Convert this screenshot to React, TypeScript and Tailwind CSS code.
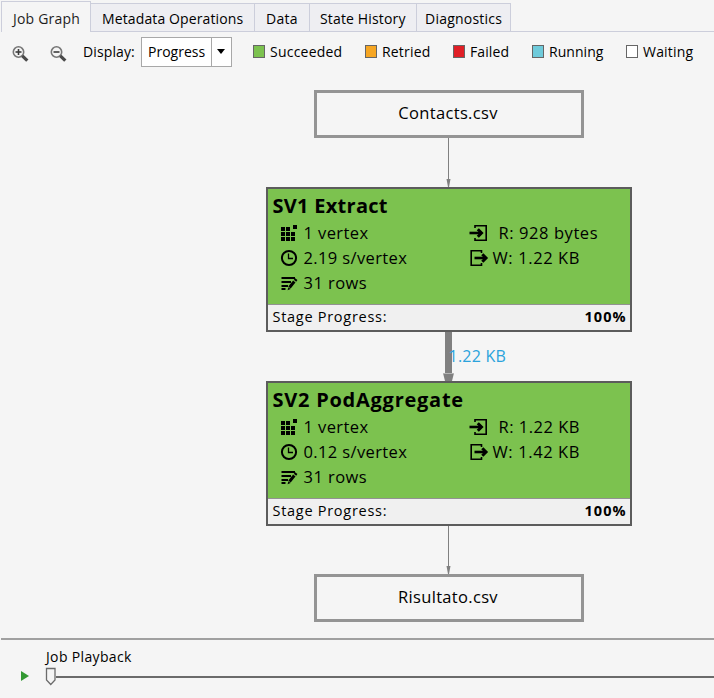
import React from "react";

const legend = [
  { name: "Succeeded", color: "bg-[#7cc24f]", place: "ml-[21px] w-[112px]", track: "tracking-[0.22px]" },
  { name: "Retried", color: "bg-[#f6a623]", place: "w-[88px]", track: "tracking-[0.18px]" },
  { name: "Failed", color: "bg-[#e01f26]", place: "w-[79px]", track: "tracking-[0.1px]" },
  { name: "Running", color: "bg-[#6fcbdb]", place: "w-[94px]", track: "tracking-[0.05px]" },
  { name: "Waiting", color: "bg-white", place: "w-[80px]", track: "tracking-[0.2px]" },
];

const tabs = [
  { name: "Metadata Operations", width: "w-[164px]", pad: "pl-[11px]", track: "tracking-[0.12px]" },
  { name: "Data", width: "w-[55px]", pad: "pl-[11px]", track: "tracking-[0.25px]" },
  { name: "State History", width: "w-[107px]", pad: "pl-[10px]", track: "tracking-[0.15px]" },
  { name: "Diagnostics", width: "w-[94px]", pad: "pl-[8px]", track: "tracking-[0.22px]" },
];

function Magnifier({ plus }: { plus?: boolean }) {
  return (
    <svg width="18" height="18" viewBox="0 0 18 18" fill="none" className="mt-[5px] shrink-0">
      <circle cx="7.5" cy="7" r="5.2" stroke="#777777" strokeWidth="1.6" />
      <path d="M4.5 7h6" stroke="#3c3c3c" strokeWidth="1.6" />
      {plus && <path d="M7.5 4v6" stroke="#3c3c3c" strokeWidth="1.6" />}
      <path d="M11.3 10.8l5 4.9" stroke="#4a4a4a" strokeWidth="3.2" />
    </svg>
  );
}

function VertexIcon() {
  return (
    <svg width="18" height="18" viewBox="0 0 18 18">
      <path d="M1 3h4v4H1zM6 3h4v4H6zM1 8h4v4H1zM6 8h4v4H6zM11 8h4v4h-4zM1 13h4v4H1zM6 13h4v4H6zM11 13h4v4h-4zM13 1h4v4h-4z" />
    </svg>
  );
}

function ClockIcon() {
  return (
    <svg width="18" height="18" viewBox="0 0 18 18" fill="none" stroke="black">
      <circle cx="9" cy="9" r="7.1" strokeWidth="2" />
      <path d="M8.5 4.5V9.5H13" strokeWidth="1.3" />
    </svg>
  );
}

function RowsIcon() {
  return (
    <svg width="18" height="18" viewBox="0 0 18 18" fill="none" stroke="black">
      <path d="M1.5 4H15M1.5 8H11M1.5 12H8M1.5 15H5.5" strokeWidth="1.9" />
      <path d="M9.5 13.5L14.3 7.5" strokeWidth="3" />
      <path d="M15 6.7L16.3 5.1" strokeWidth="3" />
      <path d="M7.6 16.2l.8-3 2.2 1.8z" fill="black" stroke="none" />
    </svg>
  );
}

function ReadIcon() {
  return (
    <svg width="20" height="18" viewBox="0 0 20 18" fill="none" stroke="black">
      <path d="M6 4V1.8H17.2V16.2H6V14" strokeWidth="1.6" />
      <path d="M0.5 9H12" strokeWidth="2.6" />
      <path d="M8.8 5.3l3.7 3.7-3.7 3.7" strokeWidth="3" />
    </svg>
  );
}

function WriteIcon() {
  return (
    <svg width="20" height="18" viewBox="0 0 20 18" fill="none" stroke="black">
      <path d="M12.5 4V1.8H2.2V16.2H12.5V14" strokeWidth="1.6" />
      <path d="M5.5 9H17" strokeWidth="2.6" />
      <path d="M13.3 5.3l3.7 3.7-3.7 3.7" strokeWidth="3" />
    </svg>
  );
}

function FileNode({ name, track }: { name: string; track: string }) {
  return (
    <div className="flex h-[48px] w-[270px] items-center justify-center border-[3px] border-[#949494] pb-[1px]">
      <span className={"mr-[1px] text-[16.5px] " + track}>{name}</span>
    </div>
  );
}

function ThinArrow({ height }: { height: string }) {
  return (
    <svg width="12" viewBox="0 0 12 49" preserveAspectRatio="xMidYMax slice" className={"shrink-0 " + height}>
      <path d="M5.5 0V43" stroke="#808080" strokeWidth="1" />
      <path d="M3.5 41h4L6 49H5z" fill="#808080" />
    </svg>
  );
}

interface StageProps {
  title: string;
  titleTrack: string;
  time: string;
  read: string;
  readTrack: string;
  write: string;
}

function Stage({ title, titleTrack, time, read, readTrack, write }: StageProps) {
  return (
    <div className="h-[145px] w-[366px] border-2 border-[#5c5c5c] bg-[#7cc24f]">
      <div className={"h-[31px] pl-[5px] text-[20px] leading-[34px] font-bold " + titleTrack}>{title}</div>
      <div className="grid h-[84px] grid-cols-[189px_1fr] pl-[12px] text-[16.5px] leading-[25px]">
        <div>
          <div className="flex h-[25px] items-center gap-[6px]">
            <VertexIcon />
            <span className="tracking-[0.4px]">1 vertex</span>
          </div>
          <div className="flex h-[25px] items-center gap-[6px]">
            <ClockIcon />
            <span className="tracking-[0.37px]">{time}</span>
          </div>
          <div className="flex h-[25px] items-center gap-[6px]">
            <RowsIcon />
            <span className="tracking-[0.45px]">31 rows</span>
          </div>
        </div>
        <div>
          <div className="flex h-[25px] items-center gap-[10px]">
            <ReadIcon />
            <span className={readTrack}>R: {read}</span>
          </div>
          <div className="flex h-[25px] items-center gap-[4px]">
            <WriteIcon />
            <span className="tracking-[0.6px]">W: {write}</span>
          </div>
        </div>
      </div>
      <div className="flex h-[26px] justify-between border-t border-[#929292] bg-[#f0f0f0] pr-[3px] pl-[5px] text-[14.5px] leading-[24px]">
        <span className="tracking-[0.72px]">Stage Progress:</span>
        <span className="font-bold tracking-[1px]">100%</span>
      </div>
    </div>
  );
}

export default function App() {
  return (
    <div className="flex h-[698px] w-[714px] flex-col overflow-hidden bg-[#f5f5f5] font-['Open_Sans','Noto_Sans',sans-serif] text-[14px] whitespace-nowrap text-black">
      <div className="flex h-[32px] items-end">
        <div className="ml-px h-[31px] w-[90px] border-t border-r border-l border-[#cccedb] pl-[11px] leading-[34px] tracking-[0.2px] text-[#1e1e1e]">
          Job Graph
        </div>
        {tabs.map((t) => (
          <div
            key={t.name}
            className={"h-[29px] border-t border-r border-b border-[#cccedb] bg-[#eeeef2] leading-[30px] " + t.width + " " + t.pad + " " + t.track}
          >
            {t.name}
          </div>
        ))}
        <div className="h-[29px] flex-1 border-b border-[#cccedb]" />
      </div>

      <div className="flex h-[39px] items-center pl-[11px]">
        <Magnifier plus />
        <div className="w-[20px]" />
        <Magnifier />
        <span className="ml-[16px] w-[58px] tracking-[0.12px]">Display:</span>
        <div className="flex h-[30px] w-[91px] border border-[#a8a8a8] bg-white">
          <span className="w-[70px] border-r border-[#a8a8a8] pl-[6px] leading-[27px]">Progress</span>
          <span className="flex flex-1 items-center justify-center pr-px">
            <svg width="8" height="5" viewBox="0 0 8 5">
              <path d="M0 0h8L4 5z" />
            </svg>
          </span>
        </div>
        {legend.map((l) => (
          <div key={l.name} className={"flex shrink-0 items-center gap-[5px] " + l.place}>
            <span className={"h-[13px] w-[12px] border border-[#666666] " + l.color} />
            <span className={l.track}>{l.name}</span>
          </div>
        ))}
      </div>

      <div className="ml-[265px] flex h-[567px] w-[367px] flex-col items-center pt-[19px]">
        <FileNode name="Contacts.csv" track="tracking-[0.35px]" />
        <ThinArrow height="h-[49px]" />
        <Stage
          title="SV1 Extract"
          titleTrack="tracking-[0.28px]"
          time="2.19 s/vertex"
          read="928 bytes"
          readTrack="tracking-[0.57px]"
          write="1.22 KB"
        />
        <div className="relative h-[49px] w-[12px]">
          <svg width="12" height="49" viewBox="0 0 12 49">
            <path d="M2 0h7v42H2z" fill="#808080" />
            <path d="M0 41h11L9 49H2z" fill="#808080" />
            <path d="M0 41.5h11" stroke="#b5b5b5" />
          </svg>
          <span className="absolute top-[12px] left-[6px] text-[16px] leading-[25px] tracking-[0.25px] text-[#2ba3dc]">1.22 KB</span>
        </div>
        <Stage
          title="SV2 PodAggregate"
          titleTrack="tracking-[0.75px]"
          time="0.12 s/vertex"
          read="1.22 KB"
          readTrack="tracking-[0.5px]"
          write="1.42 KB"
        />
        <ThinArrow height="h-[48px]" />
        <FileNode name="Risultato.csv" track="tracking-[0.32px]" />
      </div>

      <div className="ml-px h-[60px] border-t-2 border-[#a0a0a0] pt-[7px]">
        <div className="ml-[45px] h-[20px] leading-[20px] tracking-[0.35px]">Job Playback</div>
        <div className="flex h-[20px] items-start">
          <svg width="10" height="12" viewBox="0 0 10 12" className="mt-[3px] ml-[19px]">
            <path d="M1 1v10l8-5z" fill="#339933" />
          </svg>
          <svg width="11" height="19" viewBox="0 0 11 19" className="ml-[15px]">
            <path d="M1.5 1.5h8.500v11.5l-4.250 4.5L1.500 13z" fill="#f5f5f5" stroke="#6b6b6b" strokeWidth="1.3" />
          </svg>
          <div className="mt-[9px] h-[2px] flex-1 bg-[#6b6b6b]" />
        </div>
      </div>
    </div>
  );
}
